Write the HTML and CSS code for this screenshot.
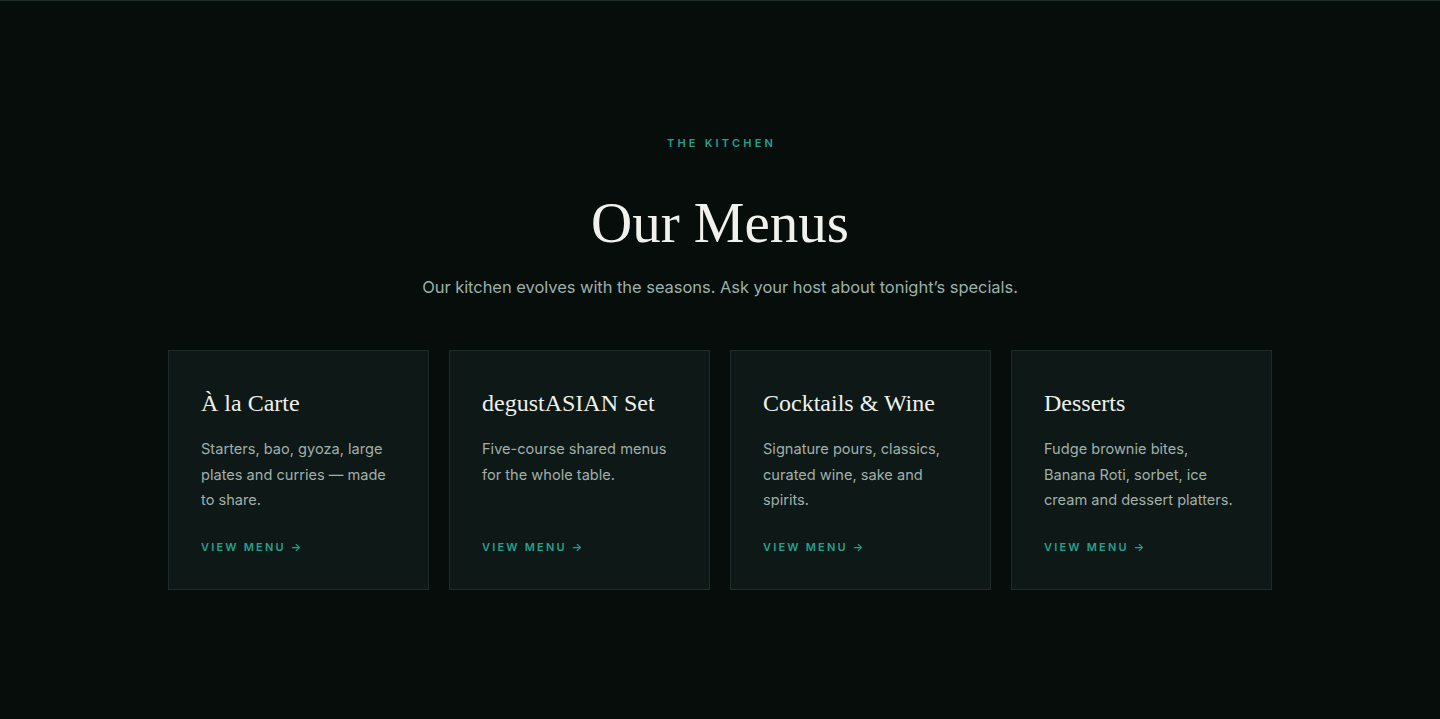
FILE: index.html
```html
<!DOCTYPE html>
<html lang="en">
<head>
<meta charset="utf-8">
<title>Our Menus</title>
<link rel="stylesheet" href="styles.css">
</head>
<body>
<section class="menus">
  <p class="eyebrow">THE KITCHEN</p>
  <h1 class="title">Our Menus</h1>
  <p class="lead">Our kitchen evolves with the seasons. Ask your host about tonight’s specials.</p>
  <div class="grid">
    <article class="card">
      <h2 class="card-title">À la Carte</h2>
      <p class="card-text">Starters, bao, gyoza, large plates and curries — made to share.</p>
      <a class="card-link" href="#">VIEW MENU →</a>
    </article>
    <article class="card">
      <h2 class="card-title">degustASIAN Set</h2>
      <p class="card-text">Five-course shared menus for the whole table.</p>
      <a class="card-link" href="#">VIEW MENU →</a>
    </article>
    <article class="card">
      <h2 class="card-title">Cocktails &amp; Wine</h2>
      <p class="card-text">Signature pours, classics, curated wine, sake and spirits.</p>
      <a class="card-link" href="#">VIEW MENU →</a>
    </article>
    <article class="card">
      <h2 class="card-title">Desserts</h2>
      <p class="card-text">Fudge brownie bites, Banana Roti, sorbet, ice cream and dessert platters.</p>
      <a class="card-link" href="#">VIEW MENU →</a>
    </article>
  </div>
</section>
</body>
</html>
```
FILE: styles.css
```css
* { box-sizing: border-box; }
html, body { margin: 0; padding: 0; }
body {
  background: #060d0b;
  color: #e8ece9;
  font-family: "Inter", "Noto Sans", sans-serif;
  height: 719px;
  overflow: hidden;
}
.menus {
  border-top: 1px solid #1f2c28;
  padding: 135px 0 0;
  display: flex;
  flex-direction: column;
  align-items: center;
}
.eyebrow {
  margin: 0;
  font-size: 11px;
  line-height: 14px;
  font-weight: 600;
  letter-spacing: 3.2px;
  color: #26a08e;
  padding-left: 3px;
}
.title {
  margin: 41px 0 0;
  font-family: "Liberation Serif", "Times New Roman", serif;
  font-weight: 400;
  font-size: 57px;
  line-height: 64px;
  color: #f1f2ee;
}
.lead {
  margin: 20px 0 0;
  font-size: 16.5px;
  line-height: 24px;
  color: #9cb0aa;
  letter-spacing: -0.05px;
}
.grid {
  margin-top: 51px;
  width: 1104px;
  display: grid;
  grid-template-columns: repeat(4, 1fr);
  gap: 20px;
}
.card {
  background: #0e1816;
  border: 1px solid #1f2b29;
  height: 240px;
  padding: 37px 32px 34px;
  display: flex;
  flex-direction: column;
}
.card-title {
  margin: 0;
  font-family: "Liberation Serif", "Times New Roman", serif;
  font-weight: 400;
  font-size: 24px;
  line-height: 30px;
  color: #eef0ec;
}
.card-text {
  margin: 19px 0 0;
  font-size: 14.6px;
  line-height: 25.5px;
  color: #a0b0ab;
  flex: 1;
}
.card-link {
  font-size: 11px;
  line-height: 16px;
  font-weight: 600;
  letter-spacing: 2.2px;
  color: #27a08e;
  text-decoration: none;
}
```
